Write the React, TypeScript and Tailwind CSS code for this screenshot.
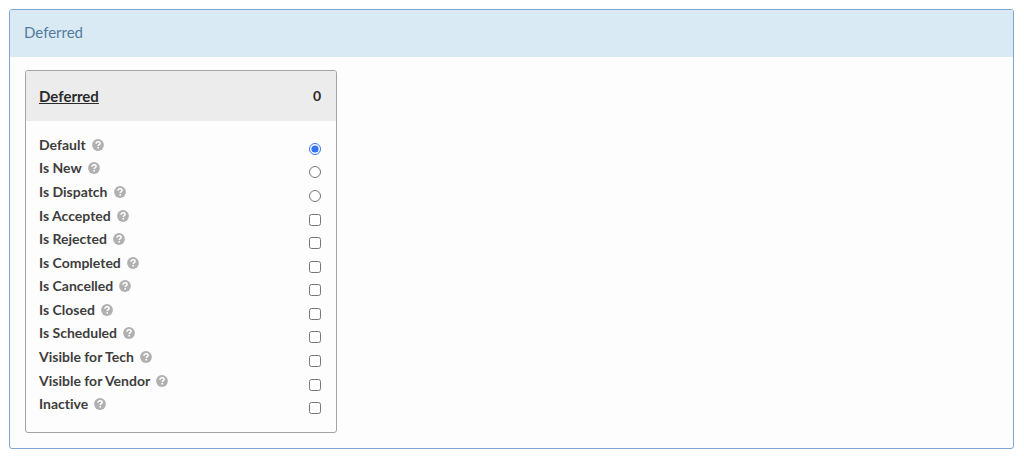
import { useState } from "react";

type Option = {
  id: string;
  label: string;
  type: "radio" | "checkbox";
};

const options: Option[] = [
  { id: "default", label: "Default", type: "radio" },
  { id: "is-new", label: "Is New", type: "radio" },
  { id: "is-dispatch", label: "Is Dispatch", type: "radio" },
  { id: "is-accepted", label: "Is Accepted", type: "checkbox" },
  { id: "is-rejected", label: "Is Rejected", type: "checkbox" },
  { id: "is-completed", label: "Is Completed", type: "checkbox" },
  { id: "is-cancelled", label: "Is Cancelled", type: "checkbox" },
  { id: "is-closed", label: "Is Closed", type: "checkbox" },
  { id: "is-scheduled", label: "Is Scheduled", type: "checkbox" },
  { id: "visible-for-tech", label: "Visible for Tech", type: "checkbox" },
  { id: "visible-for-vendor", label: "Visible for Vendor", type: "checkbox" },
  { id: "inactive", label: "Inactive", type: "checkbox" },
];

function HelpIcon() {
  return (
    <svg viewBox="0 0 12 12" className="size-3 shrink-0" aria-hidden="true">
      <circle cx="6" cy="6" r="5.9" fill="#b0b0b0" />
      <path
        d="M4 4.7C4.1 3.4 4.9 2.7 6.1 2.7c1.1 0 2 .6 2 1.7 0 1.3-1.9 1.3-1.9 2.6"
        fill="none"
        stroke="#fff"
        strokeWidth="1.5"
      />
      <rect x="5.4" y="7.9" width="1.6" height="1.6" fill="#fff" />
    </svg>
  );
}

function OptionRow({ option, checked, onChange }: { option: Option; checked: boolean; onChange: () => void }) {
  return (
    <li className="flex items-center justify-between">
      <label htmlFor={option.id} className="flex items-center gap-1.5 leading-5">
        {option.label}
        <HelpIcon />
      </label>
      <input
        id={option.id}
        type={option.type}
        name={option.type === "radio" ? "status-type" : option.id}
        checked={checked}
        onChange={onChange}
        className="mt-2 size-3 accent-[#3573f5]"
      />
    </li>
  );
}

function StatusCard() {
  const [selected, setSelected] = useState("default");
  const [flags, setFlags] = useState<Record<string, boolean>>({});

  return (
    <article className="overflow-hidden rounded-[3px] border border-[#a3a3a3]">
      <header className="flex items-center justify-between bg-[#ececec] py-[13px] pr-[15px] pl-[13px] font-bold text-[#2b2b2b]">
        <a href="#deferred" className="text-[15px] leading-6 underline">
          Deferred
        </a>
        <span className="text-sm leading-6">0</span>
      </header>
      <ul className="grid min-h-[311px] auto-rows-fr pt-3 pr-[15px] pb-4 pl-[13px] text-sm font-bold text-[#3d3d3d]">
        {options.map((option) => (
          <OptionRow
            key={option.id}
            option={option}
            checked={option.type === "radio" ? selected === option.id : !!flags[option.id]}
            onChange={() =>
              option.type === "radio"
                ? setSelected(option.id)
                : setFlags({ ...flags, [option.id]: !flags[option.id] })
            }
          />
        ))}
      </ul>
    </article>
  );
}

export default function App() {
  return (
    <main className="bg-white pt-[9px] pr-2.5 pb-4 pl-[9px] font-['Lato','Open_Sans',sans-serif] [font-variant-ligatures:none]">
      <section className="overflow-hidden rounded-[3px] border border-[#7fa5d0] bg-[#fdfdfd]">
        <h2 className="bg-[#daeaf5] px-3.5 pt-2.5 pb-[13px] text-[15px] leading-6 text-[#527c9d]">Deferred</h2>
        <div className="grid gap-[19px] pt-[13px] pr-3.5 pb-[15px] pl-[15px] sm:grid-cols-3">
          <StatusCard />
        </div>
      </section>
    </main>
  );
}
